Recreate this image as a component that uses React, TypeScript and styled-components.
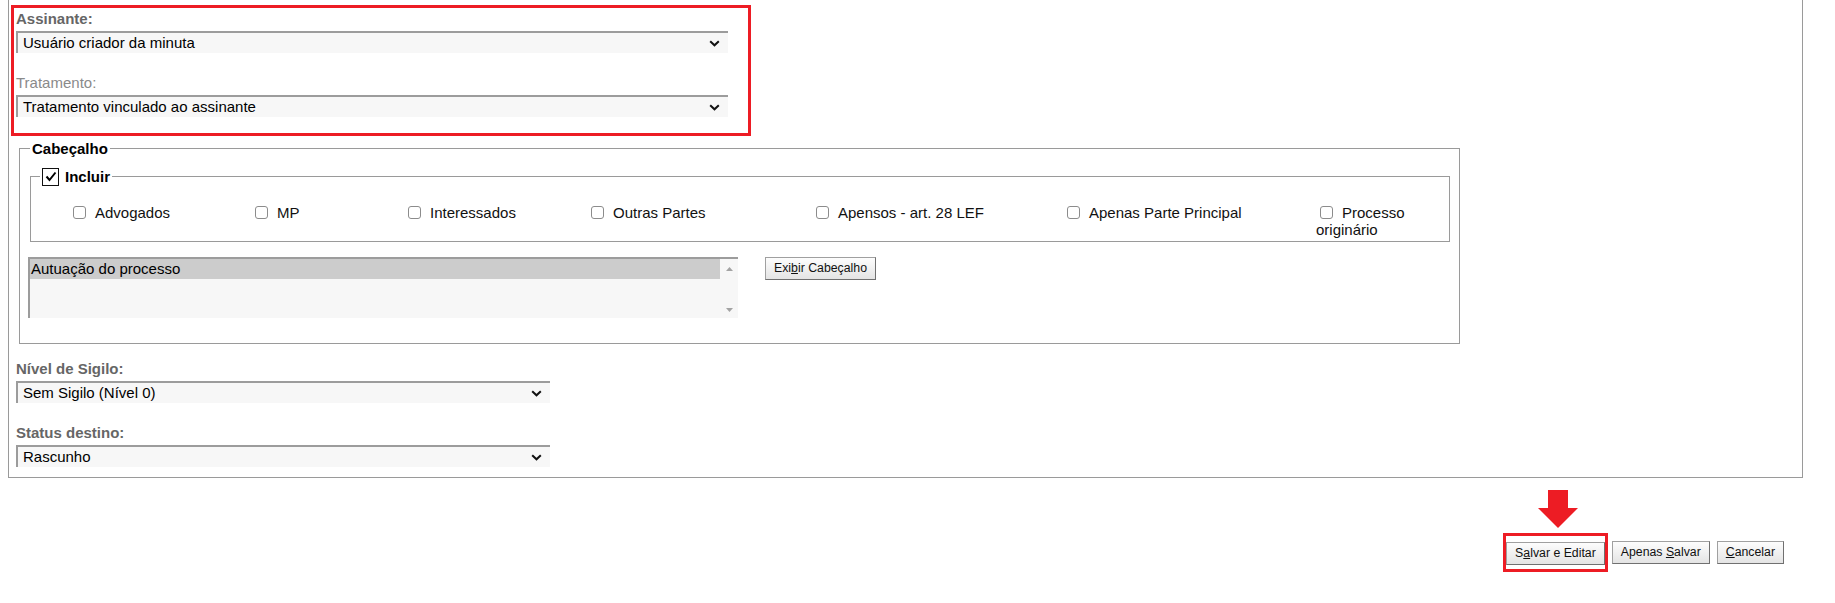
import React from 'react';
import styled, { createGlobalStyle } from 'styled-components';

const Global = createGlobalStyle`
  html, body { margin: 0; padding: 0; background: #fff; }
  body {
    font-family: "Liberation Sans", Arial, sans-serif;
    font-size: 15px;
    color: #000;
  }
`;

const Panel = styled.div`
  box-sizing: border-box;
  margin-left: 8px;
  width: 1795px;
  height: 478px;
  border: 1px solid #9a9a9a;
  border-top: none;
  padding: 5px 0 0 2px;
`;

const Highlight = styled.div`
  box-sizing: border-box;
  width: 740px;
  height: 131px;
  border: 3px solid #ed1c24;
  padding: 2px 0 0 2px;
  display: flex;
  flex-direction: column;
  gap: 21px;
`;

const Field = styled.div`
  display: flex;
  flex-direction: column;
  gap: 4px;
`;

const Label = styled.label<{ $muted?: boolean }>`
  display: block;
  line-height: 17px;
  height: 17px;
  font-weight: ${(p) => (p.$muted ? 400 : 700)};
  color: ${(p) => (p.$muted ? '#8a8a8a' : '#666')};
`;

const SelectBox = styled.div<{ $w: number }>`
  box-sizing: border-box;
  width: ${(p) => p.$w}px;
  height: 22px;
  background: #f7f7f7;
  border-top: 2px solid #9c9c9c;
  border-left: 2px solid #9c9c9c;
  display: flex;
  align-items: center;
  justify-content: space-between;
  padding: 0 8px 0 5px;
  line-height: 20px;
  white-space: nowrap;
`;

const Chevron = () => (
  <svg width="11" height="7" viewBox="0 0 11 7" aria-hidden>
    <polyline points="1.2,1.2 5.5,5.3 9.8,1.2" fill="none" stroke="#111" strokeWidth="2" />
  </svg>
);

const Select = ({ value, width }: { value: string; width: number }) => (
  <SelectBox $w={width}>
    <span>{value}</span>
    <Chevron />
  </SelectBox>
);

const OuterSet = styled.fieldset`
  box-sizing: border-box;
  margin: 4px 0 0 8px;
  width: 1441px;
  min-width: 0;
  border: 1px solid #9a9a9a;
  padding: 10px 9px 25px 8px;
`;

const OuterLegend = styled.legend`
  margin-left: 2px;
  padding: 0 2px;
  font-weight: 700;
  line-height: 17px;
`;

const InnerSet = styled.fieldset`
  box-sizing: border-box;
  margin: 0 0 0 2px;
  width: 1420px;
  min-width: 0;
  border: 1px solid #9a9a9a;
  padding: 18px 0 3px 9px;
`;

const InnerLegend = styled.legend`
  padding: 0 2px;
  display: flex;
  align-items: center;
  gap: 6px;
  font-weight: 700;
  line-height: 19px;
`;

const BigCheck = styled.span`
  box-sizing: border-box;
  display: inline-flex;
  align-items: center;
  justify-content: center;
  width: 17px;
  height: 18px;
  border: 1.5px solid #111;
  background: #fff;
`;

const OptionsGrid = styled.div`
  display: grid;
  grid-template-columns: 182px 153px 183px 225px 251px 253px 120px;
  align-items: start;
  margin-left: 29px;
`;

const OptionLabel = styled.label`
  line-height: 17px;
  color: #111;
`;

const Box = styled.input`
  appearance: none;
  box-sizing: border-box;
  width: 13px;
  height: 13px;
  margin: 0 9px 0 4px;
  border: 1px solid #8c8c8c;
  border-radius: 3px;
  background: #fff;
  vertical-align: -1px;
`;

const ListRow = styled.div`
  display: flex;
  align-items: flex-start;
  gap: 27px;
  margin-top: 15px;
`;

const ListBox = styled.div`
  box-sizing: border-box;
  width: 710px;
  height: 61px;
  background: #f7f7f7;
  border-top: 2px solid #9c9c9c;
  border-left: 2px solid #9c9c9c;
  display: flex;
`;

const ListItems = styled.div`
  flex: 1;
`;

const ListItem = styled.div<{ $selected?: boolean }>`
  height: 20px;
  line-height: 20px;
  padding-left: 1px;
  background: ${(p) => (p.$selected ? '#cccccc' : 'transparent')};
`;

const ScrollTrack = styled.div`
  width: 18px;
  display: flex;
  flex-direction: column;
  justify-content: space-between;
  align-items: center;
  padding: 8px 0 6px;
  box-sizing: border-box;
`;

const Tri = ({ up }: { up?: boolean }) => (
  <svg width="7" height="4" viewBox="0 0 7 4" aria-hidden>
    <polygon points={up ? '0,4 7,4 3.5,0' : '0,0 7,0 3.5,4'} fill="#a3a3a3" />
  </svg>
);

const Button = styled.button`
  box-sizing: border-box;
  height: 23px;
  padding: 0 8px;
  font-family: "Liberation Sans", Arial, sans-serif;
  font-size: 12.3px;
  color: #111;
  background: linear-gradient(#fdfdfd, #e4e4e4);
  border: 1px solid #a0a0a0;
  border-right-color: #707070;
  border-bottom-color: #707070;
  border-radius: 0;
  line-height: 21px;
  white-space: nowrap;
  cursor: pointer;
`;

const LowerFields = styled.div`
  display: flex;
  flex-direction: column;
  gap: 21px;
  margin: 16px 0 0 5px;
`;

const Actions = styled.div`
  display: flex;
  justify-content: flex-end;
  align-items: center;
  gap: 7px;
  width: 1784px;
  margin-top: 55px;
`;

const Marked = styled.div`
  position: relative;
  display: flex;
  border: 3px solid #ed1c24;
  padding: 6px 0 4px;
  margin-right: -3px;
  margin-left: -3px;
`;

const Arrow = styled.svg`
  position: absolute;
  left: 32px;
  top: -46px;
`;

export default function App() {
  const options = [
    'Advogados',
    'MP',
    'Interessados',
    'Outras Partes',
    'Apensos - art. 28 LEF',
    'Apenas Parte Principal',
    'Processo originário',
  ];
  return (
    <>
      <Global />
      <Panel>
        <Highlight>
          <Field>
            <Label>Assinante:</Label>
            <Select value="Usuário criador da minuta" width={712} />
          </Field>
          <Field>
            <Label $muted>Tratamento:</Label>
            <Select value="Tratamento vinculado ao assinante" width={712} />
          </Field>
        </Highlight>

        <OuterSet>
          <OuterLegend>Cabeçalho</OuterLegend>
          <InnerSet>
            <InnerLegend>
              <BigCheck>
                <svg width="12" height="11" viewBox="0 0 12 11" aria-hidden>
                  <polyline points="1.5,5.5 4.5,9 10.5,1.5" fill="none" stroke="#000" strokeWidth="2" />
                </svg>
              </BigCheck>
              Incluir
            </InnerLegend>
            <OptionsGrid>
              {options.map((o) => (
                <OptionLabel key={o}>
                  <Box type="checkbox" />
                  {o}
                </OptionLabel>
              ))}
            </OptionsGrid>
          </InnerSet>
          <ListRow>
            <ListBox>
              <ListItems>
                <ListItem $selected>Autuação do processo</ListItem>
              </ListItems>
              <ScrollTrack>
                <Tri up />
                <Tri />
              </ScrollTrack>
            </ListBox>
            <Button>
              Exi<u>b</u>ir Cabeçalho
            </Button>
          </ListRow>
        </OuterSet>

        <LowerFields>
          <Field>
            <Label>Nível de Sigilo:</Label>
            <Select value="Sem Sigilo (Nível 0)" width={534} />
          </Field>
          <Field>
            <Label>Status destino:</Label>
            <Select value="Rascunho" width={534} />
          </Field>
        </LowerFields>
      </Panel>

      <Actions>
        <Marked>
          <Arrow width="40" height="38" viewBox="0 0 40 38" aria-hidden>
            <polygon points="10,0 30,0 30,18 40,18 20,38 0,18 10,18" fill="#ed1c24" />
          </Arrow>
          <Button>
            S<u>a</u>lvar e Editar
          </Button>
        </Marked>
        <Button>
          Apenas <u>S</u>alvar
        </Button>
        <Button>
          <u>C</u>ancelar
        </Button>
      </Actions>
    </>
  );
}
